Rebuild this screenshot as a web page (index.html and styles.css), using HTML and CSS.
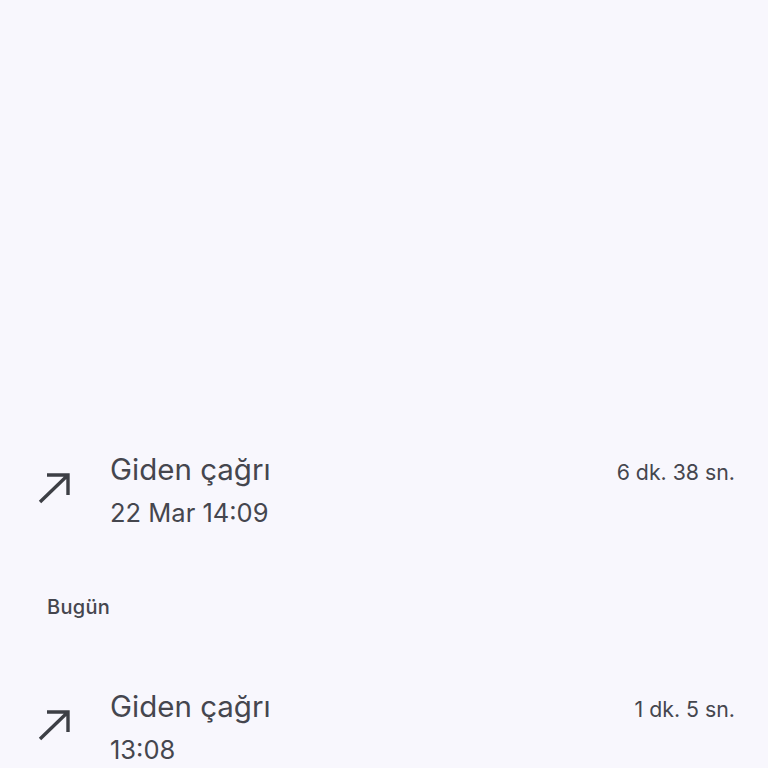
FILE: index.html
```html
<!DOCTYPE html>
<html lang="tr">
<head>
<meta charset="utf-8">
<link rel="stylesheet" href="styles.css">
</head>
<body>
<main class="log">
  <div class="spacer"></div>
  <div class="row">
    <svg class="icon" viewBox="0 0 34 34" width="34" height="34"><path d="M3 31 L31 4 M10 4 H31 V24" fill="none" stroke="#3d3f45" stroke-width="3.4" stroke-linecap="butt"/></svg>
    <div class="text">
      <div class="title">Giden çağrı</div>
      <div class="sub">22 Mar 14:09</div>
    </div>
    <div class="dur">6 dk. 38 sn.</div>
  </div>
  <div class="header">Bugün</div>
  <div class="row">
    <svg class="icon" viewBox="0 0 34 34" width="34" height="34"><path d="M3 31 L31 4 M10 4 H31 V24" fill="none" stroke="#3d3f45" stroke-width="3.4" stroke-linecap="butt"/></svg>
    <div class="text">
      <div class="title">Giden çağrı</div>
      <div class="sub">13:08</div>
    </div>
    <div class="dur">1 dk. 5 sn.</div>
  </div>
</main>
</body>
</html>
```
FILE: styles.css
```css
html, body {
  margin: 0;
  padding: 0;
  background: #f8f7fd;
  height: 768px;
  overflow: hidden;
}
body {
  font-family: Inter, Roboto, sans-serif;
  color: #45464e;
}
.log {
  display: flex;
  flex-direction: column;
}
.spacer {
  height: 449px;
}
.row {
  display: flex;
  align-items: flex-start;
  padding: 0 33px 0 37px;
}
.icon {
  flex: none;
  margin-top: 22px;
  margin-right: 39px;
}
.text {
  flex: 1;
  display: flex;
  flex-direction: column;
}
.title {
  font-size: 29.5px;
  line-height: 40px;
}
.sub {
  font-size: 25.5px;
  line-height: 40px;
  margin-top: 4px;
}
.dur {
  font-size: 21.3px;
  line-height: 28px;
  margin-top: 9px;
}
.header {
  font-size: 20px;
  font-weight: 500;
  letter-spacing: 0.3px;
  padding-left: 47px;
  line-height: 28px;
  margin-top: 60px;
  margin-bottom: 65px;
}
```
